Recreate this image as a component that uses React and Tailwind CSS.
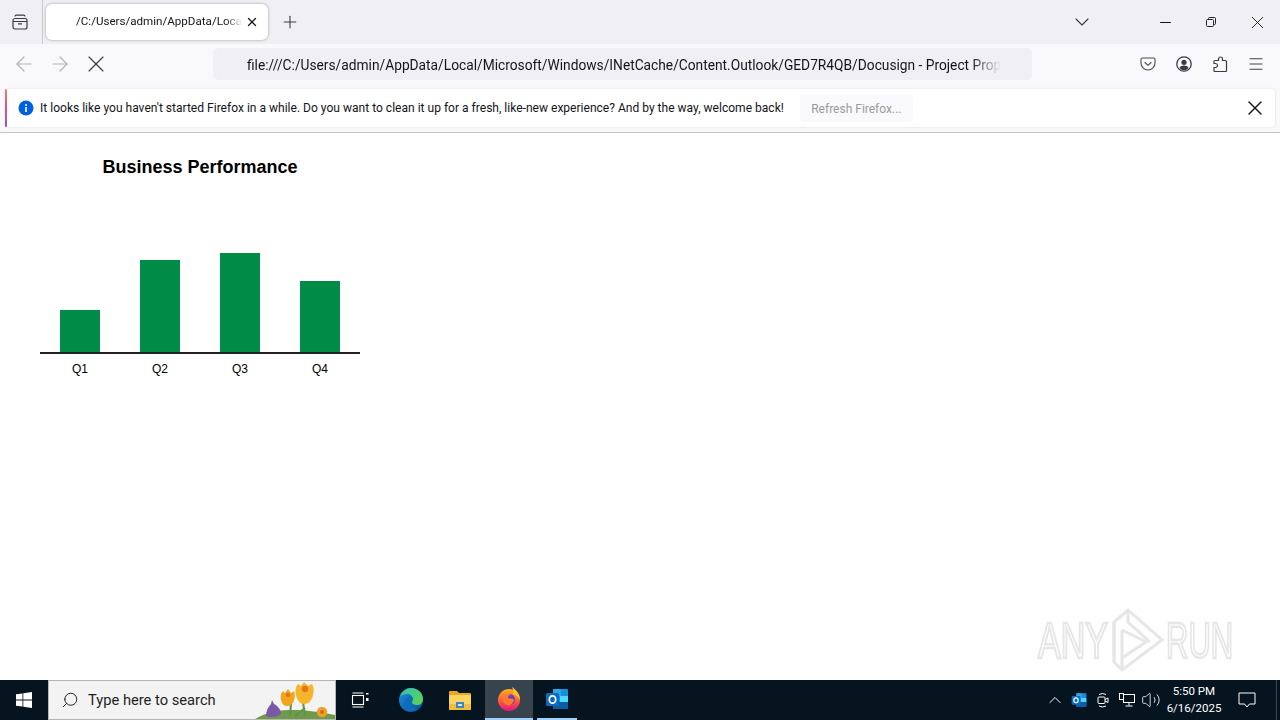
import React from "react";
import { ArrowLeft, ArrowRight, X, Plus, ChevronDown, Minus, Menu, ChevronUp, Search, Volume2 } from "lucide-react";

const bars = [
  { label: "Q1", height: 42 },
  { label: "Q2", height: 92 },
  { label: "Q3", height: 99 },
  { label: "Q4", height: 71 },
];

function FirefoxViewIcon() {
  return (
    <svg viewBox="0 0 16 16" className="h-4 w-4" fill="none" stroke="#3b3b45" strokeWidth="1.2">
      <rect x="1" y="4.5" width="14" height="10.5" rx="2" />
      <path d="M3 2.6C3 1.8 3.6 1.2 4.4 1.2h7.2c.8 0 1.4.6 1.4 1.4" />
      <path d="M1 7.5h14M6 9.8h4" />
    </svg>
  );
}

function RestoreIcon() {
  return (
    <svg viewBox="0 0 12 12" className="h-3 w-3" fill="none" stroke="#222" strokeWidth="1">
      <rect x="1.5" y="3.5" width="7" height="7" rx="1" />
      <path d="M3.5 3.5V2.5a1 1 0 0 1 1-1h5a1 1 0 0 1 1 1v5a1 1 0 0 1-1 1h-1" />
    </svg>
  );
}

function PocketIcon() {
  return (
    <svg viewBox="0 0 16 16" className="h-4 w-4" fill="none" stroke="#4a4a52" strokeWidth="1.1">
      <path d="M2.3 2h11.4c.7 0 1.3.6 1.3 1.3V7a7 7 0 0 1-14 0V3.3C1 2.6 1.6 2 2.3 2z" />
      <path d="M5 6.500l3 2.800 3-2.800" strokeLinecap="round" />
    </svg>
  );
}

function AccountIcon() {
  return (
    <svg viewBox="0 0 16 16" className="h-4 w-4">
      <circle cx="8" cy="8" r="7.200" fill="none" stroke="#3b3b45" strokeWidth="1.300" />
      <circle cx="8" cy="6.300" r="2.600" fill="#3b3b45" />
      <path d="M3.400 12c1-1.700 2.600-2.400 4.600-2.400s3.600.7 4.600 2.400A6 6 0 0 1 8 14.300 6 6 0 0 1 3.400 12z" fill="#3b3b45" />
    </svg>
  );
}

function ExtensionsIcon() {
  return (
    <svg viewBox="0 0 16 16" className="h-4 w-4" fill="none" stroke="#3b3b45" strokeWidth="1.200">
      <path d="M6.500 3a2 2 0 0 1 4 0v1.500h3c.6 0 1 .4 1 1v9c0 .6-.4 1-1 1H3c-.6 0-1-.4-1-1v-3h1.500a2 2 0 0 0 0-4H2v-2c0-.6.4-1 1-1h3.500z" />
    </svg>
  );
}

function WindowsLogo() {
  return (
    <svg viewBox="0 0 16 16" className="h-4 w-4" fill="#fff">
      <path d="M0 2.300l6.500-.9v6.200H0zM7.300 1.300L16 0v7.600H7.300zM0 8.400h6.500v6.200L0 13.700zM7.300 8.400H16V16l-8.700-1.200z" />
    </svg>
  );
}

function Flowers() {
  return (
    <svg viewBox="0 0 80 37" className="h-[37px] w-20">
      <path d="M0 37c10-6 22-9 34-9 18 0 32 2 46 5v4z" fill="#6f9a4c" />
      <path d="M11 34c0-5 2-9 5-12l1-4 2 4c4 2 7 6 7 10-3 3-11 4-15 2z" fill="#7a58a8" />
      <path d="M35 34l1-12M50 34l-2-14M40 34l10-8" stroke="#5f9440" strokeWidth="2" />
      <path d="M26 18c-1-4 0-7 2-9l2 2 3-4 3 4 3-2c1 3 1 6 0 9-1 4-4 6-7 6-3 0-5-2-6-6z" fill="#f2a41e" />
      <path d="M41 13c-1-5 0-9 2-11l3 2 3-4 4 4 4-2c2 3 2 7 1 11-1 5-4 9-9 9-4 0-7-4-8-9z" fill="#f7b52a" />
      <circle cx="50" cy="7" r="3.200" fill="#e2761c" />
      <circle cx="33" cy="13" r="2.300" fill="#e2761c" />
      <circle cx="67" cy="30" r="5.200" fill="#eda02a" />
      <circle cx="67" cy="30" r="1.800" fill="#c9601a" />
    </svg>
  );
}

function TaskViewIcon() {
  return (
    <svg viewBox="0 0 18 16" className="h-4 w-[18px]" fill="none" stroke="#fff" strokeWidth="1.100">
      <rect x="1.500" y="3.500" width="11" height="9" />
      <path d="M1.500 1h11M1.500 15h11" />
      <rect x="15" y="6" width="2.500" height="3" fill="#fff" stroke="none" />
      <rect x="15" y="1" width="2.500" height="1.500" fill="#fff" stroke="none" />
    </svg>
  );
}

function EdgeIcon() {
  return (
    <svg viewBox="0 0 24 24" className="h-6 w-6">
      <defs>
        <linearGradient id="edgeA" x1="0" y1="0" x2="1" y2="1">
          <stop offset="0%" stopColor="#35c1b0" />
          <stop offset="100%" stopColor="#5fd64f" />
        </linearGradient>
        <linearGradient id="edgeB" x1="0" y1="0" x2="1" y2="1">
          <stop offset="0%" stopColor="#1b8fd6" />
          <stop offset="100%" stopColor="#0b4f9a" />
        </linearGradient>
      </defs>
      <circle cx="12" cy="12" r="12" fill="url(#edgeB)" />
      <path d="M1 9C3 3 8 0 12 0c7 0 12 5 12 11 0 4-3 6-6 6-3 0-5-1-5-3 0-1 1-1 1-3 0-3-3-5-6-5-3 0-6 1-7 3z" fill="url(#edgeA)" />
      <path d="M13 14c-2 3 1 7 5 7-3 2-7 3-10 1-3-2-4-7-2-10 2-3 5-4 7-2z" fill="#0f6cbd" />
    </svg>
  );
}

function FolderIcon() {
  return (
    <svg viewBox="0 0 24 22" className="h-[22px] w-6">
      <path d="M1 3a1 1 0 0 1 1-1h7l2 2h11a1 1 0 0 1 1 1v3H1z" fill="#e8a91f" />
      <rect x="1" y="6" width="22" height="15" rx="1" fill="#fcd462" />
      <rect x="1" y="15" width="22" height="6" fill="#f4bd3a" />
      <rect x="8" y="13" width="8" height="6" fill="#3b87c4" />
      <rect x="10" y="15" width="4" height="2" fill="#d5e8f5" />
    </svg>
  );
}

function FirefoxIcon() {
  return (
    <svg viewBox="0 0 24 24" className="h-6 w-6">
      <defs>
        <linearGradient id="foxA" x1="0.500" y1="0" x2="0.500" y2="1">
          <stop offset="0%" stopColor="#ffb01f" />
          <stop offset="55%" stopColor="#ff5a36" />
          <stop offset="100%" stopColor="#e31587" />
        </linearGradient>
      </defs>
      <circle cx="12" cy="13" r="11" fill="url(#foxA)" />
      <path d="M15 0c3 2 8 6 8 13-2-3-4-5-7-6 1-2 0-5-1-7z" fill="#ffc42b" />
      <circle cx="12.500" cy="12.500" r="5.500" fill="#6d3fc4" />
      <path d="M6 10c2-3 6-4 8-2-2 0-3 1-3 3 2 1 5 0 6 2-1 4-4 6-7 5-3-1-5-4-4-8z" fill="#ff7a2e" />
    </svg>
  );
}

function OutlookIcon({ className }) {
  return (
    <svg viewBox="0 0 24 24" className={className}>
      <rect x="8" y="2" width="15" height="20" rx="1" fill="#1490df" />
      <rect x="8" y="2" width="8" height="7" fill="#28a8ea" />
      <rect x="15" y="9" width="8" height="7" fill="#50d9ff" />
      <rect x="8" y="15" width="15" height="7" fill="#0a5ea8" />
      <rect x="1" y="6" width="13" height="13" rx="1.500" fill="#0f6cbd" />
      <ellipse cx="7.500" cy="12.500" rx="3.200" ry="3.700" fill="none" stroke="#fff" strokeWidth="1.700" />
    </svg>
  );
}

function MeetIcon() {
  return (
    <svg viewBox="0 0 16 16" className="h-4 w-4" fill="none" stroke="#fff" strokeWidth="1">
      <rect x="3" y="5" width="7" height="6.500" rx="1" />
      <path d="M10 7.500l3-1.500v4.500l-3-1.500" />
      <path d="M4 2.500a7 7 0 0 1 7 0M4 14a7 7 0 0 0 7 0" />
    </svg>
  );
}

function NetworkIcon() {
  return (
    <svg viewBox="0 0 16 16" className="h-4 w-4" fill="none" stroke="#fff" strokeWidth="1">
      <rect x="4.500" y="2.500" width="11" height="8" />
      <rect x="0.500" y="1.500" width="4" height="6" fill="#06141f" />
      <path d="M10 10.500v3M6.500 14h7" />
    </svg>
  );
}

function NotificationIcon() {
  return (
    <svg viewBox="0 0 18 16" className="h-4 w-[18px]" fill="none" stroke="#fff" strokeWidth="1">
      <path d="M1 1h16v11h-5.500L9 15l-2.500-3H1z" />
    </svg>
  );
}

function Watermark() {
  return (
    <div className="pointer-events-none absolute bottom-[6px] left-[1038px] flex h-[66px] w-[196px] items-center text-white blur-[0.5px] [-webkit-text-stroke:2.500px_#e6e6e6]">
      <span className="w-[66px] origin-left scale-x-[0.68] text-[50px] leading-none [font-family:'Liberation_Sans',sans-serif]">ANY</span>
      <svg viewBox="0 0 62 66" className="h-[66px] w-[62px]" fill="none" stroke="#e6e6e6" strokeWidth="3">
        <path d="M10 14L24 2l34 30-40 30-8-8z" />
        <path d="M10 14v40M18 62V22" />
        <path d="M18 22l24 12-24 16" />
        <path d="M24 2v12l22 20" />
      </svg>
      <span className="w-[68px] origin-left scale-x-[0.62] text-[50px] leading-none [font-family:'Liberation_Sans',sans-serif]">RUN</span>
    </div>
  );
}

export default function App() {
  return (
    <div className="flex h-screen w-full flex-col overflow-hidden bg-white [font-family:Roboto,sans-serif]">
      {/* tab strip */}
      <div className="flex h-11 shrink-0 items-center bg-[#f0f0f4]">
        <div className="flex w-[42px] pl-3"><FirefoxViewIcon /></div>
        <div className="h-full w-px bg-[#c9c9ce]" />
        <div className="ml-[3px] flex h-9 w-[222px] items-center rounded-md bg-white pl-[30px] pr-[9px] shadow-[0_0_3px_rgba(0,0,0,0.35)]">
          <span className="whitespace-nowrap text-[11.600px] text-[#15141a] [mask-image:linear-gradient(to_right,black_90%,transparent)]">
            /C:/Users/admin/AppData/Loca
          </span>
          <X className="ml-auto h-3.5 w-3.5 text-[#15141a]" strokeWidth={2.2} />
        </div>
        <Plus className="ml-3 h-5 w-5 text-[#3b3b45]" strokeWidth={1.3} />
        <ChevronDown className="ml-auto mr-[63px] h-6 w-6 text-[#3b3b45]" strokeWidth={1.1} />
        <div className="flex items-center">
          <Minus className="mr-[31px] h-[17px] w-[17px] text-[#111]" strokeWidth={1.4} />
          <RestoreIcon />
          <X className="ml-[30px] mr-3 h-[21px] w-[21px] text-[#111]" strokeWidth={1} />
        </div>
      </div>

      {/* nav bar */}
      <div className="flex h-11 shrink-0 items-center bg-[#f9f9fb] pb-1">
        <ArrowLeft className="ml-3 h-6 w-6 text-[#b4b4b8]" strokeWidth={1.2} />
        <ArrowRight className="ml-3 h-6 w-6 text-[#b4b4b8]" strokeWidth={1.2} />
        <X className="ml-[10px] h-7 w-7 text-[#3b3b45]" strokeWidth={1} />
        <div className="ml-[103px] flex h-8 w-[819px] items-center rounded-md bg-[#f0f0f4] pl-[34px] pt-[2px]">
          <span className="whitespace-nowrap text-[13.750px] text-[#15141a] [mask-image:linear-gradient(to_right,black_96%,transparent)]">
            file:///C:/Users/admin/AppData/Local/Microsoft/Windows/INetCache/Content.Outlook/GED7R4QB/Docusign - Project Prop
          </span>
        </div>
        <div className="ml-auto mr-[6px] flex items-center">
          <div className="flex w-9 justify-center"><PocketIcon /></div>
          <div className="flex w-9 justify-center"><AccountIcon /></div>
          <div className="flex w-9 justify-center"><ExtensionsIcon /></div>
          <div className="flex w-9 justify-center"><Menu className="h-[18px] w-[18px] text-[#3b3b45]" strokeWidth={1.3} /></div>
        </div>
      </div>

      {/* notification bar */}
      <div className="flex h-[45px] shrink-0 border-b border-[#c4c4c8] bg-[#f9f9fb] px-[5px] pb-[5px] pt-px">
        <div className="flex w-full items-center rounded-r bg-white pr-2 shadow-[0_0_2px_rgba(0,0,0,0.15)]">
          <div className="h-full w-[2px] shrink-0 rounded-full bg-linear-to-b from-[#f0826a] via-[#d4508f] to-[#8a5cc8]" />
          <svg viewBox="0 0 16 16" className="ml-[11px] h-4 w-4 shrink-0">
            <circle cx="8" cy="8" r="7.500" fill="#0060df" />
            <rect x="7.200" y="7" width="1.600" height="5" fill="#fff" />
            <circle cx="8" cy="5" r="1" fill="#fff" />
          </svg>
          <span className="ml-[6px] whitespace-nowrap pt-px text-[12.060px] text-[#15141a]">
            It looks like you haven't started Firefox in a while. Do you want to clean it up for a fresh, like-new experience? And by the way, welcome back!
          </span>
          <button className="ml-4 h-[27px] w-[113px] rounded bg-[#f9f9fb] pt-px text-xs text-[#9a9aa0]">Refresh Firefox...</button>
          <X className="ml-auto h-6 w-6 text-[#15141a]" strokeWidth={1.4} />
        </div>
      </div>

      {/* page */}
      <div className="relative min-h-0 flex-1 bg-white [font-family:'Liberation_Sans',sans-serif]">
        <div className="ml-10 w-80 pt-6">
          <h1 className="text-center text-lg leading-5 font-bold text-black">Business Performance</h1>
          <div className="mt-[67px] flex h-[110px] items-end border-b-2 border-[#222]">
            {bars.map((b) => (
              <div key={b.label} className="flex flex-1 justify-center">
                <div className="w-10 bg-[#008c46]" style={{ height: b.height }} />
              </div>
            ))}
          </div>
          <div className="mt-2 flex">
            {bars.map((b) => (
              <div key={b.label} className="flex-1 text-center text-xs leading-[14px] text-black">{b.label}</div>
            ))}
          </div>
        </div>
        <Watermark />
      </div>

      {/* taskbar */}
      <div className="flex h-10 shrink-0 items-stretch bg-[#06141f] text-white">
        <div className="flex w-12 items-center justify-center"><WindowsLogo /></div>
        <div className="flex w-72 items-center overflow-hidden border border-[#b5b5b5] bg-[#f3f3f3] pl-3 text-[#1f1f1f]">
          <Search className="h-[18px] w-[18px] -scale-x-100" strokeWidth={1.3} />
          <span className="ml-[9px] pt-px text-[14.700px]">Type here to search</span>
          <div className="ml-auto self-end"><Flowers /></div>
        </div>
        <div className="flex w-12 items-center justify-center"><TaskViewIcon /></div>
        <div className="ml-[3px] flex w-12 items-center justify-center"><EdgeIcon /></div>
        <div className="flex w-[50px] items-center justify-center"><FolderIcon /></div>
        <div className="flex w-12 items-center justify-center border-b-2 border-[#9fd0f5] bg-[#37444e]"><FirefoxIcon /></div>
        <div className="flex w-12 items-center justify-center px-1"><div className="flex h-full w-full items-center justify-center border-b-2 border-[#9fd0f5]"><OutlookIcon className="h-6 w-6" /></div></div>
        <div className="ml-auto flex items-center">
          <div className="flex w-6 justify-center"><ChevronUp className="h-5 w-5" strokeWidth={1.2} /></div>
          <div className="flex w-6 justify-center"><OutlookIcon className="h-4 w-4" /></div>
          <div className="flex w-6 justify-center"><MeetIcon /></div>
          <div className="flex w-6 justify-center"><NetworkIcon /></div>
          <div className="flex w-6 justify-center"><Volume2 className="h-5 w-5" strokeWidth={1} /></div>
          <div className="w-[62px] text-center text-[11.500px] leading-[17px]">
            <div>5:50 PM</div>
            <div>6/16/2025</div>
          </div>
          <div className="flex w-11 justify-center"><NotificationIcon /></div>
          <div className="ml-[7px] h-full w-px bg-[#3a4650]" />
          <div className="w-[3px]" />
        </div>
      </div>
    </div>
  );
}
